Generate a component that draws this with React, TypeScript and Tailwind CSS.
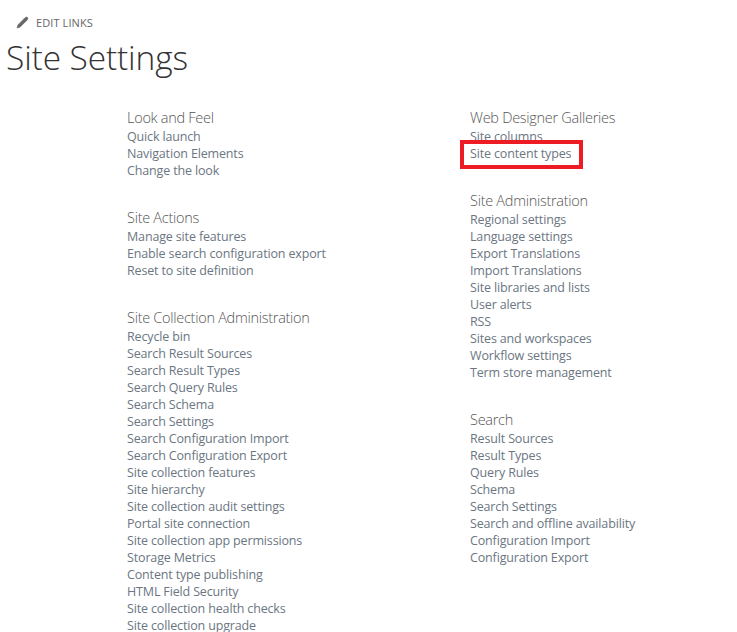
import React from 'react';
import { Pencil } from 'lucide-react';

const leftCol = [
  { title: 'Look and Feel', links: ['Quick launch', 'Navigation Elements', 'Change the look'] },
  { title: 'Site Actions', links: ['Manage site features', 'Enable search configuration export', 'Reset to site definition'] },
  {
    title: 'Site Collection Administration',
    links: [
      'Recycle bin', 'Search Result Sources', 'Search Result Types', 'Search Query Rules', 'Search Schema',
      'Search Settings', 'Search Configuration Import', 'Search Configuration Export', 'Site collection features',
      'Site hierarchy', 'Site collection audit settings', 'Portal site connection', 'Site collection app permissions',
      'Storage Metrics', 'Content type publishing', 'HTML Field Security', 'Site collection health checks',
      'Site collection upgrade',
    ],
  },
];

const rightCol = [
  { title: 'Web Designer Galleries', links: ['Site columns', 'Site content types'] },
  {
    title: 'Site Administration',
    links: [
      'Regional settings', 'Language settings', 'Export Translations', 'Import Translations', 'Site libraries and lists',
      'User alerts', 'RSS', 'Sites and workspaces', 'Workflow settings', 'Term store management',
    ],
  },
  {
    title: 'Search',
    links: [
      'Result Sources', 'Result Types', 'Query Rules', 'Schema', 'Search Settings', 'Search and offline availability',
      'Configuration Import', 'Configuration Export',
    ],
  },
];

const Section: React.FC<{ title: string; links: string[] }> = ({ title, links }) => (
  <div className="mb-[29px]">
    <h3 className="text-[14.5px] leading-[20px] font-light text-[#555555] tracking-[-0.28px]">{title}</h3>
    <ul>
      {links.map((l) => (
        <li key={l} className="text-[12.5px] leading-[17px] text-[#6b7682] tracking-[-0.15px] whitespace-nowrap">
          {l}
        </li>
      ))}
    </ul>
  </div>
);

export default function App() {
  return (
    <div className="h-[632px] w-[737px] overflow-hidden bg-white font-['Open_Sans','Noto_Sans',sans-serif]">
      <div className="flex items-center gap-[7px] pl-[16px] pt-[15px] text-[#666666]">
        <Pencil size={13} fill="#666666" strokeWidth={1} />
        <span className="text-[11px] leading-[15px] tracking-[0.1px]">EDIT LINKS</span>
      </div>
      <h1 className="pl-[6px] mt-[4px] text-[33.5px] leading-[46px] font-light text-[#333333] tracking-[-0.13px]">Site Settings</h1>
      <div className="flex mt-[28px]">
        <div className="w-[127px] shrink-0 overflow-hidden text-[12.5px] text-[#6b7682] leading-[17px]">
          <div className="ml-[-6px] mt-[27px]">s</div>
          <div className="ml-[-6px] mt-[145px]">s</div>
        </div>
        <div className="w-[343px] shrink-0">
          {leftCol.map((s) => (
            <Section key={s.title} {...s} />
          ))}
        </div>
        <div className="relative">
          {rightCol.map((s) => (
            <Section key={s.title} {...s} />
          ))}
          <div className="absolute left-[-10px] top-[32px] h-[29px] w-[123px] border-[4px] border-[#ed1c24]" />
        </div>
      </div>
    </div>
  );
}
